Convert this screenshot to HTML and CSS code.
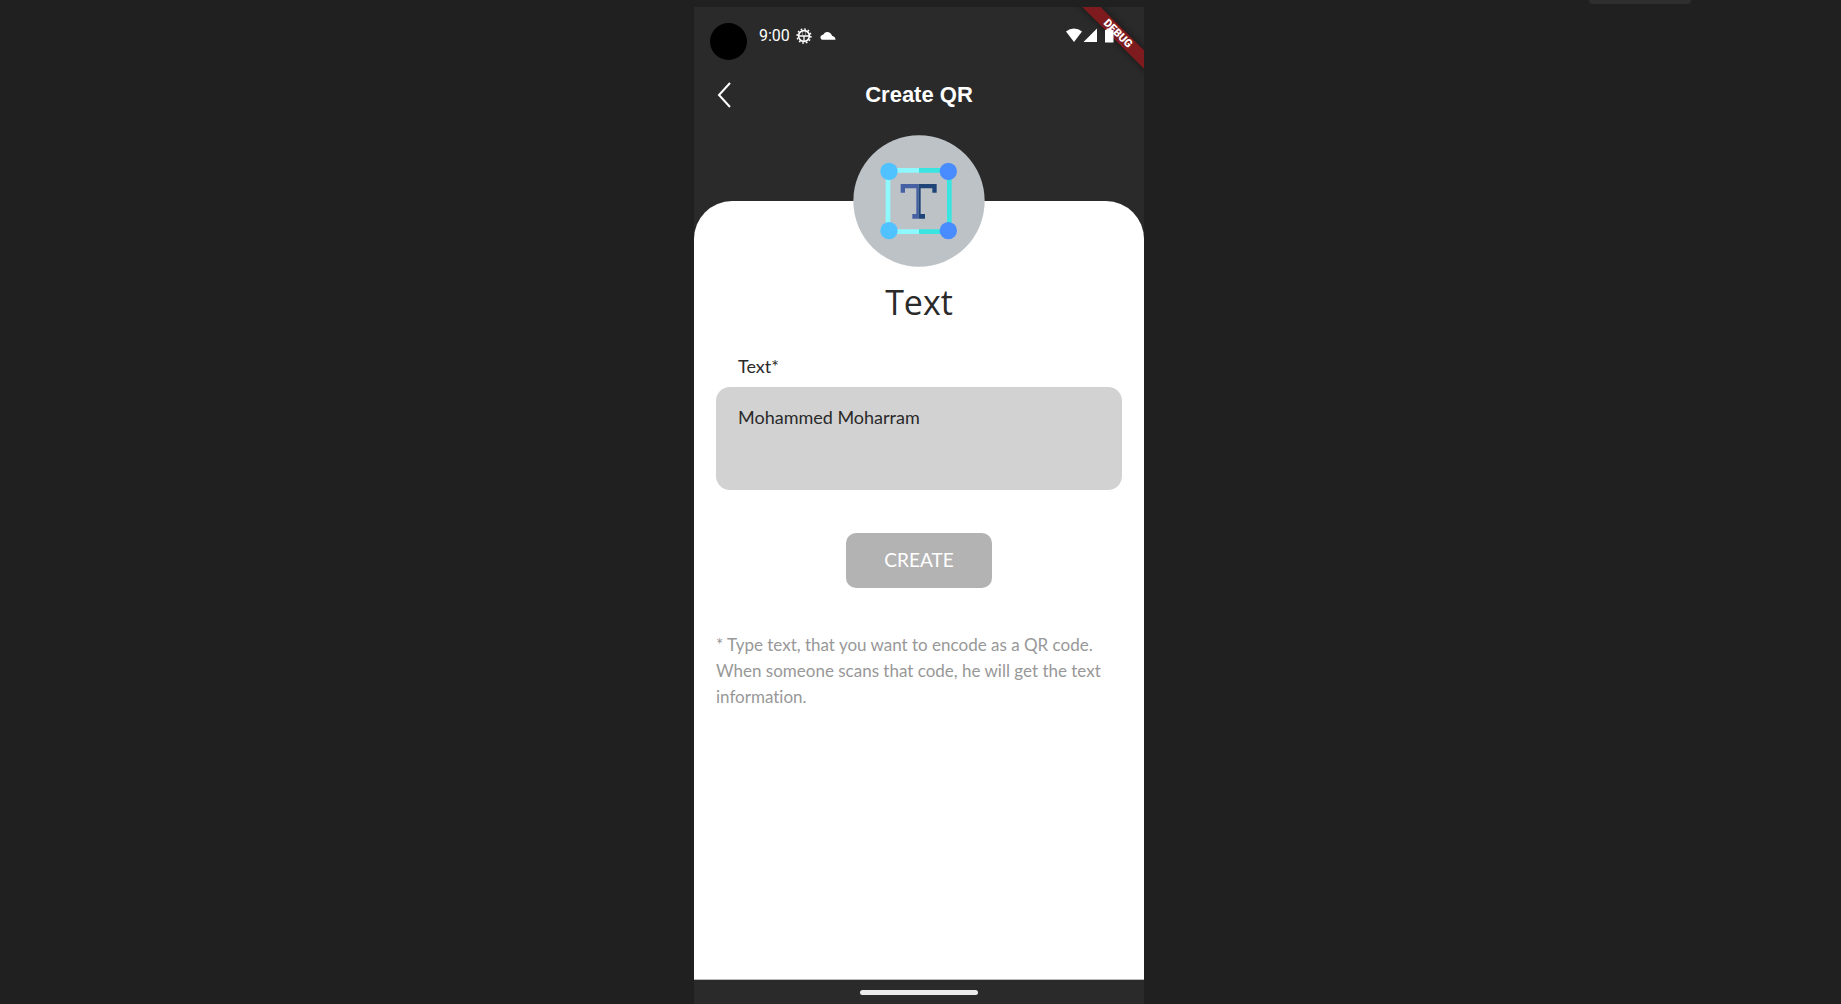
FILE: index.html
```html
<!DOCTYPE html>
<html lang="en">
<head>
<meta charset="utf-8">
<meta name="viewport" content="width=device-width, initial-scale=1">
<title>Create QR</title>
<link rel="stylesheet" href="styles.css">
</head>
<body>
<div class="window-tab"></div>
<div class="phone">
  <div class="ribbon-corner"><span class="ribbon">DEBUG</span></div>
  <div class="status">
    <span class="camera"></span>
    <div class="status-left">
      <span>9:00</span>
      <svg class="status-icon" viewBox="0 0 16 16" fill="none" stroke="#fff">
        <circle cx="8" cy="8" r="5.4" stroke-width="1.6"/>
        <circle cx="8" cy="8" r="6.900" stroke-width="1.5" stroke-dasharray="1.7 1.913"/>
        <path d="M3 8H13M8 8V13" stroke-width="1.300"/>
        <path d="M6.500 3V7.500M9.500 3V7.500" stroke-width="1" stroke-opacity=".4"/>
      </svg>
      <svg class="status-icon" viewBox="0 0 16 16" fill="#fff">
        <path d="M2.600 11.800A2.500 2.500 0 0 1 .8 8.100Q2 6.700 3.400 6.600A4.300 4.300 0 0 1 10.900 5.700L12.400 7.900Q15.500 8.600 15.500 11.800Z"/>
      </svg>
    </div>
    <svg class="status-right" viewBox="0 0 48 16" fill="#fff">
      <path d="M8 15L0 4.500Q3.500 1.500 8 1.500T16 4.500Z"/>
      <path d="M31 1.500V15H17.500Z"/>
      <path d="M40.500 1.500H45.500V3H47.500V15.500H39V3H40.500Z"/>
    </svg>
  </div>
  <header class="appbar">
    <button class="back" type="button" aria-label="Back">
      <svg viewBox="0 0 14 26" fill="none" stroke="#fff" stroke-width="2"><path d="M13 1L2 13L13 25"/></svg>
    </button>
    <h1>Create QR</h1>
  </header>
  <main class="sheet">
    <svg class="badge" viewBox="70 196 396 396">
      <circle cx="268" cy="394" r="197" fill="#bcc2c6"/>
      <path d="M268 302H175V486H268" stroke="#8ef8ff" stroke-width="14" fill="none"/>
      <path d="M268 302H359V486H268" stroke="#3ae4e0" stroke-width="14" fill="none"/>
      <circle cx="178" cy="305" r="26" fill="#50c2ff"/>
      <circle cx="178" cy="483" r="26" fill="#50c2ff"/>
      <circle cx="356" cy="305" r="26" fill="#488cff"/>
      <circle cx="356" cy="483" r="26" fill="#488cff"/>
      <path d="M213 343H267V447H248V433H260V356H226V369H213Z" fill="#4660a4"/>
      <path d="M267 343H321V369H308V356H273V433H286V447H267Z" fill="#1e4478"/>
    </svg>
    <h2>Text</h2>
    <form class="form">
      <label for="content">Text*</label>
      <textarea id="content" spellcheck="false">Mohammed Moharram</textarea>
      <button class="create" type="button">CREATE</button>
    </form>
    <p class="hint">* Type text, that you want to encode as a QR code. When someone scans that code, he will get the text information.</p>
  </main>
  <div class="navbar"><span class="handle"></span></div>
</div>
</body>
</html>
```
FILE: styles.css
```css
* { box-sizing: border-box; }
body {
  margin: 0;
  min-height: 100vh;
  padding: 7px 3px 0 0;
  display: flex;
  justify-content: center;
  background: #202020;
  font-family: Lato, sans-serif;
  font-variant-ligatures: none;
  color: #2a2a2a;
}
.window-tab {
  position: absolute;
  top: 0;
  right: 150px;
  width: 102px;
  height: 4px;
  border-radius: 0 0 4px 4px;
  background: #2e2e2e;
}
.phone {
  position: relative;
  width: 100%;
  max-width: 450px;
  display: flex;
  flex-direction: column;
  background: #2a2a2a;
}
.ribbon-corner {
  position: absolute;
  top: 0;
  right: 0;
  width: 80px;
  height: 80px;
  overflow: hidden;
}
.ribbon {
  position: absolute;
  top: 20px;
  right: -34px;
  width: 120px;
  height: 13px;
  transform: rotate(45deg);
  background: #7e1b1e;
  box-shadow: 0 0 7px rgba(0, 0, 0, .5);
  color: #fff;
  font: 900 11px/13px Roboto, sans-serif;
  text-align: center;
}
.status {
  position: relative;
  display: flex;
  align-items: flex-start;
  height: 56px;
  padding: 16px 30px 0 16px;
}
.camera {
  width: 37px;
  height: 37px;
  border-radius: 50%;
  background: #000;
}
.status-left {
  display: flex;
  flex: 1;
  align-items: center;
  gap: 6px;
  height: 26px;
  padding-left: 12px;
  color: #fff;
  font: 16px/26px Roboto, sans-serif;
}
.status-icon { width: 16px; height: 16px; }
.status-icon + .status-icon { margin-left: 2px; }
.status-right { width: 48px; height: 16px; margin-top: 4px; }
.appbar {
  display: flex;
  align-items: center;
  justify-content: center;
  position: relative;
  height: 64px;
}
.back {
  position: absolute;
  left: 15px;
  padding: 8px;
  border: 0;
  background: none;
  line-height: 0;
}
.back svg { width: 14px; height: 26px; }
h1 {
  margin: 0;
  color: #fff;
  font: bold 22px/28px "Liberation Sans", sans-serif;
}
.sheet {
  flex: 1;
  display: flex;
  flex-direction: column;
  align-items: center;
  margin-top: 74px;
  padding: 0 22px 22px;
  border-bottom: 1px solid #bbb;
  border-radius: 38px 38px 0 0;
  background: #fff;
}
.badge { width: 132px; height: 132px; margin-top: -66px; }
h2 {
  margin: 10px 0 0;
  font: 400 34px/50px "Open Sans", sans-serif;
}
.form {
  align-self: stretch;
  display: flex;
  flex-direction: column;
  align-items: center;
  margin-top: 26px;
}
label {
  align-self: stretch;
  padding-left: 22px;
  font-size: 18px;
  line-height: 26px;
}
textarea {
  width: 100%;
  height: 103px;
  margin-top: 8px;
  padding: 17px 22px;
  border: 0;
  border-radius: 14px;
  background: #d2d2d2;
  color: #2a2a2a;
  font: 18px/26px Lato, sans-serif;
  resize: none;
}
.create {
  width: 146px;
  height: 55px;
  margin-top: 43px;
  padding: 0 0 2px;
  border: 0;
  border-radius: 10px;
  background: #b3b3b3;
  color: #fff;
  font: 19px/26px Lato, sans-serif;
}
.hint {
  align-self: stretch;
  margin: 44px 0 0;
  color: #989898;
  font-size: 17px;
  line-height: 26px;
}
.navbar {
  display: flex;
  justify-content: center;
  height: 24px;
  padding-top: 10px;
}
.handle { width: 118px; height: 5px; border-radius: 3px; background: #ebebeb; }
```
